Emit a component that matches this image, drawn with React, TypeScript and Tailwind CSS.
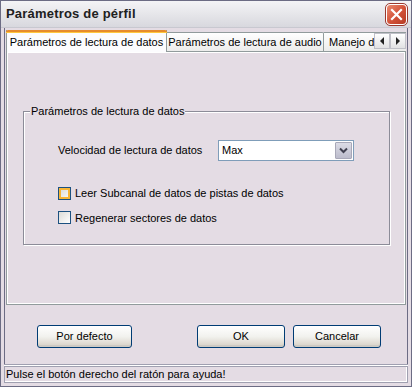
import React from "react";

const font = { fontFamily: '"Liberation Sans", Arial, sans-serif' };

function Checkbox({ hover }: { hover?: boolean }) {
  return (
    <div className="w-[13px] h-[13px] border border-[#1c5180] bg-gradient-to-br from-[#dcdcd7] to-[#ffffff] flex items-center justify-center">
      {hover ? (
        <div className="w-[11px] h-[11px] border-2 border-[#f8b636] bg-gradient-to-br from-[#e0e0dc] to-[#f6f6f4]" />
      ) : null}
    </div>
  );
}

function Button({ label, w }: { label: string; w: string }) {
  return (
    <div
      className={`${w} h-[23px] rounded-[3px] border border-[#003c74] bg-gradient-to-b from-[#ffffff] via-[#f2f2ee] to-[#d6d0c5] flex items-center justify-center text-[11px] text-black shadow-[inset_0_-2px_0_#cdcac3]`}
    >
      {label}
    </div>
  );
}

export default function App() {
  return (
    <div
      className="w-[412px] h-[387px] bg-[#e4dce4] border border-[#6c6c84] flex flex-col text-black overflow-hidden"
      style={font}
    >
      {/* Title bar */}
      <div className="h-[27px] flex items-center justify-between pl-[5px] pr-[4px] bg-gradient-to-b from-[#f4f4f6] via-[#e6e6ea] to-[#d8d8de] border-b border-[#c8c8d0]">
        <span className="text-[13px] font-bold text-[#202020] tracking-[0.2px]">Parámetros de pérfil</span>
        <div className="w-[21px] h-[21px] rounded-[4px] border border-[#ffffff] outline outline-1 outline-[#9a3a30] bg-gradient-to-br from-[#e98a72] via-[#d4543a] to-[#b63a24] flex items-center justify-center">
          <svg width="13" height="13" viewBox="0 0 13 13">
            <path d="M2 2 L11 11 M11 2 L2 11" stroke="#ffffff" strokeWidth="2.2" strokeLinecap="square" />
          </svg>
        </div>
      </div>

      {/* Inner frame */}
      <div className="flex-1 flex flex-col border-x-[3px] border-b-[3px] border-[#e4dce4] shadow-[inset_1px_0_0_#6c6c84,inset_-1px_0_0_#6c6c84]">
        <div className="flex-1 flex flex-col px-[2px]">
          {/* Tabs */}
          <div className="h-[22px] flex items-end relative text-[11px] mt-[1px]">
            <div className="h-[22px] w-[161px] bg-[#fcfcfe] border-x border-[#919b9c] relative z-10 flex items-center justify-center -mb-[1px] pt-[2px]">
              <div className="absolute left-[-1px] right-[-1px] top-0 h-[3px] bg-[#e68b2c] rounded-t-[2px] border-b border-[#ffc73c]" />
              <span>Parámetros de lectura de datos</span>
            </div>
            <div className="h-[19px] w-[157px] bg-gradient-to-b from-[#ffffff] to-[#ececeb] border-t border-r border-[#919b9c] rounded-tr-[2px] flex items-center justify-center">
              Parámetros de lectura de audio
            </div>
            <div className="h-[19px] flex-1 bg-gradient-to-b from-[#ffffff] to-[#ececeb] border-t border-[#919b9c] flex items-center pl-[5px] whitespace-nowrap">
              Manejo d
            </div>
            <div className="absolute right-[0px] top-[4px] flex">
              <div className="w-[16px] h-[16px] bg-gradient-to-b from-[#ffffff] to-[#e2e2e4] border border-[#c0c0c8] flex items-center justify-center">
                <svg width="6" height="8" viewBox="0 0 6 8"><path d="M5 0 L1 4 L5 8 Z" fill="#222" /></svg>
              </div>
              <div className="w-[16px] h-[16px] bg-gradient-to-b from-[#ffffff] to-[#e2e2e4] border border-[#c0c0c8] flex items-center justify-center">
                <svg width="6" height="8" viewBox="0 0 6 8"><path d="M1 0 L5 4 L1 8 Z" fill="#222" /></svg>
              </div>
            </div>
          </div>

          {/* Panel */}
          <div className="h-[254px] border border-[#919b9c] bg-[#e4dce4] shadow-[inset_1px_1px_0_#ffffff,inset_-1px_-1px_0_#ffffff] pt-[59px] pl-[16px] pr-[15px]">
            <div className="relative h-[134px] border border-[#8c8c98] shadow-[1px_1px_0_#ffffff,inset_1px_1px_0_#ffffff]">
              <span className="absolute left-[6px] -top-[8px] bg-[#e4dce4] px-[1px] text-[11px] leading-[14px]">
                Parámetros de lectura de datos
              </span>
              <div className="flex items-center pl-[34px] mt-[28px] text-[11px]">
                <span className="w-[160px]">Velocidad de lectura de datos</span>
                <div className="w-[136px] h-[21px] border border-[#7f9db9] bg-white flex items-center justify-between pl-[3px] pr-[1px]">
                  <span>Max</span>
                  <div className="w-[17px] h-[17px] bg-gradient-to-b from-[#dcdce6] to-[#bcbccc] border border-[#a8a8b8] rounded-[1px] flex items-center justify-center">
                    <svg width="9" height="7" viewBox="0 0 9 7">
                      <path d="M1 1.5 L4.5 5 L8 1.5" stroke="#404050" strokeWidth="2" fill="none" />
                    </svg>
                  </div>
                </div>
              </div>
              <div className="flex items-center pl-[34px] mt-[24px] gap-[4px] text-[11px]">
                <Checkbox hover />
                <span>Leer Subcanal de datos de pistas de datos</span>
              </div>
              <div className="flex items-center pl-[34px] mt-[8px] gap-[4px] text-[11px]">
                <Checkbox />
                <span>Regenerar sectores de datos</span>
              </div>
            </div>
          </div>

          {/* Buttons */}
          <div className="flex items-center mt-[20px] pl-[31px]">
            <Button label="Por defecto" w="w-[95px]" />
            <div className="w-[65px]" />
            <Button label="OK" w="w-[88px]" />
            <div className="w-[8px]" />
            <Button label="Cancelar" w="w-[88px]" />
          </div>
        </div>

        {/* Status bar */}
        <div className="mt-auto h-[19px] border-t border-[#a0a0b0] shadow-[inset_0_1px_0_#ffffff] pt-[1px]">
          <div className="h-[17px] mx-0 border border-[#a0a0b0] shadow-[inset_-1px_-1px_0_#ffffff] flex items-center pl-[1px] text-[11px]">
            Pulse el botón derecho del ratón para ayuda!
          </div>
        </div>
      </div>
    </div>
  );
}
